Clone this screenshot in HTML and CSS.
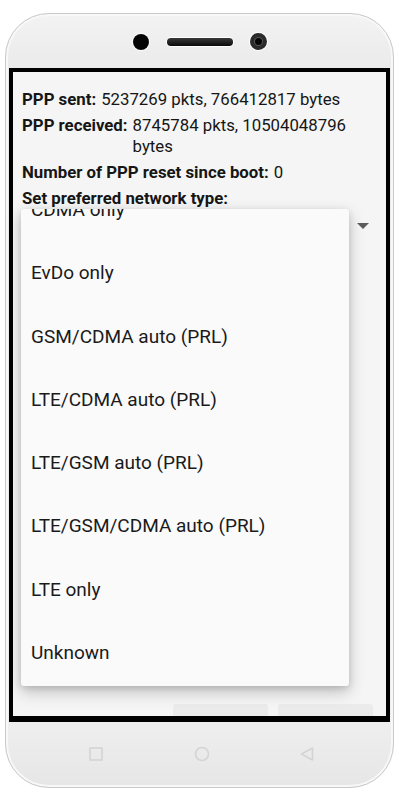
FILE: index.html
```html
<!DOCTYPE html>
<html lang="en">
<head>
  <meta charset="UTF-8">
  <meta name="viewport" content="width=device-width, initial-scale=1.0">
  <title>Radio info</title>
  <link rel="stylesheet" href="styles.css">
</head>
<body>
  <div class="phone">
    <div class="top">
      <span class="dot"></span>
      <span class="speaker"></span>
      <span class="cam"><span class="lens"></span></span>
    </div>

    <div class="screen">
      <div class="info">
        <div class="row"><b>PPP sent:</b><span>5237269 pkts, 766412817 bytes</span></div>
        <div class="row"><b>PPP received:</b><span>8745784 pkts, 10504048796 bytes</span></div>
        <div class="row"><b>Number of PPP reset since boot:</b><span>0</span></div>
        <div class="row"><b>Set preferred network type:</b></div>
        <div class="spinner"><span class="arrow"></span></div>
      </div>
      <div class="buttons">
        <span class="btn"></span>
        <span class="btn"></span>
      </div>

      <div class="popup">
        <ul class="options">
          <li>CDMA only</li>
          <li>EvDo only</li>
          <li>GSM/CDMA auto (PRL)</li>
          <li>LTE/CDMA auto (PRL)</li>
          <li>LTE/GSM auto (PRL)</li>
          <li>LTE/GSM/CDMA auto (PRL)</li>
          <li>LTE only</li>
          <li>Unknown</li>
        </ul>
      </div>
    </div>

    <div class="nav">
      <svg width="14" height="14" viewBox="0 0 14 14"><rect x="1" y="1" width="12" height="12" fill="none" stroke="#d4d4d4" stroke-width="1.6"/></svg>
      <svg width="16" height="16" viewBox="0 0 16 16"><circle cx="8" cy="8" r="6.5" fill="none" stroke="#d4d4d4" stroke-width="1.6"/></svg>
      <svg width="14" height="14" viewBox="0 0 14 14"><path d="M12.5 1 L1.5 7 L12.5 13 Z" fill="none" stroke="#d4d4d4" stroke-width="1.6" stroke-linejoin="round"/></svg>
    </div>
  </div>
</body>
</html>
```

FILE: styles.css
```css
* {
  box-sizing: border-box;
}

body {
  margin: 0;
  background: #fff;
  font-family: Roboto, 'Noto Sans', sans-serif;
}

.phone {
  width: 389px;
  height: 775px;
  margin: 13px 0 0 5px;
  padding: 0 3px;
  border: 1px solid #c9c9c9;
  border-radius: 44px;
  background: linear-gradient(#f3f3f3, #e9e9e9 8%, #eeeeee 92%, #e6e6e6);
  box-shadow: inset 0 0 0 2px #f8f8f8;
  display: flex;
  flex-direction: column;
}

.top {
  height: 54px;
  display: flex;
  align-items: center;
  justify-content: center;
  padding-top: 1px;
}

.dot {
  width: 16px;
  height: 16px;
  border-radius: 50%;
  background: #050505;
  box-shadow: 0 0 0 1px #fff;
}

.speaker {
  width: 66px;
  height: 8px;
  margin: 0 17px 0 18px;
  border-radius: 4px;
  background: linear-gradient(#3a3a3a, #0a0a0a);
  box-shadow: 0 0 0 1px #fff;
}

.cam {
  width: 17px;
  height: 17px;
  border-radius: 50%;
  background: #2b2b2b;
  box-shadow: 0 0 0 1px #fff;
  display: flex;
  align-items: center;
  justify-content: center;
}

.lens {
  width: 7px;
  height: 7px;
  border-radius: 50%;
  background: #050505;
  box-shadow: 0 0 0 1px #555;
}

.screen {
  position: relative;
  height: 654px;
  border: 4px solid #000;
  border-bottom-width: 6px;
  background: #f5f5f5;
  display: flex;
  flex-direction: column;
  justify-content: space-between;
}

.info {
  padding: 17px 0 0 9px;
  font-size: 16.8px;
  color: #161616;
}

.row {
  display: flex;
  gap: 5px;
  line-height: 21px;
  margin-bottom: 5px;
}

.row b {
  font-weight: 700;
  flex-shrink: 0;
}

.row span {
  flex: 1;
  padding-right: 8px;
}

.spinner {
  height: 40px;
  display: flex;
  justify-content: flex-end;
  align-items: flex-start;
  padding: 9px 17px 0 0;
}

.arrow {
  width: 0;
  height: 0;
  border-left: 6px solid transparent;
  border-right: 6px solid transparent;
  border-top: 6px solid #5d5d5d;
}

.buttons {
  display: flex;
  justify-content: flex-end;
  gap: 10px;
  padding: 0 13px 0 0;
}

.btn {
  width: 95px;
  height: 12px;
  border-radius: 3px 3px 0 0;
  background: #ebebeb;
}

.popup {
  position: absolute;
  left: 8px;
  top: 137px;
  width: 328px;
  height: 477px;
  overflow: hidden;
  background: #fafafa;
  border-radius: 3px;
  box-shadow: 0 6px 16px rgba(0, 0, 0, 0.22), 0 2px 6px rgba(0, 0, 0, 0.12);
}

.options {
  list-style: none;
  margin: -31px 0 0;
  padding: 0;
}

.options li {
  height: 63.3px;
  line-height: 63px;
  padding-left: 10px;
  font-size: 19px;
  color: #1a1a1a;
}

.nav {
  flex: 1;
  display: flex;
  align-items: center;
  justify-content: space-between;
  padding: 0 76px 2px 80px;
}
```
